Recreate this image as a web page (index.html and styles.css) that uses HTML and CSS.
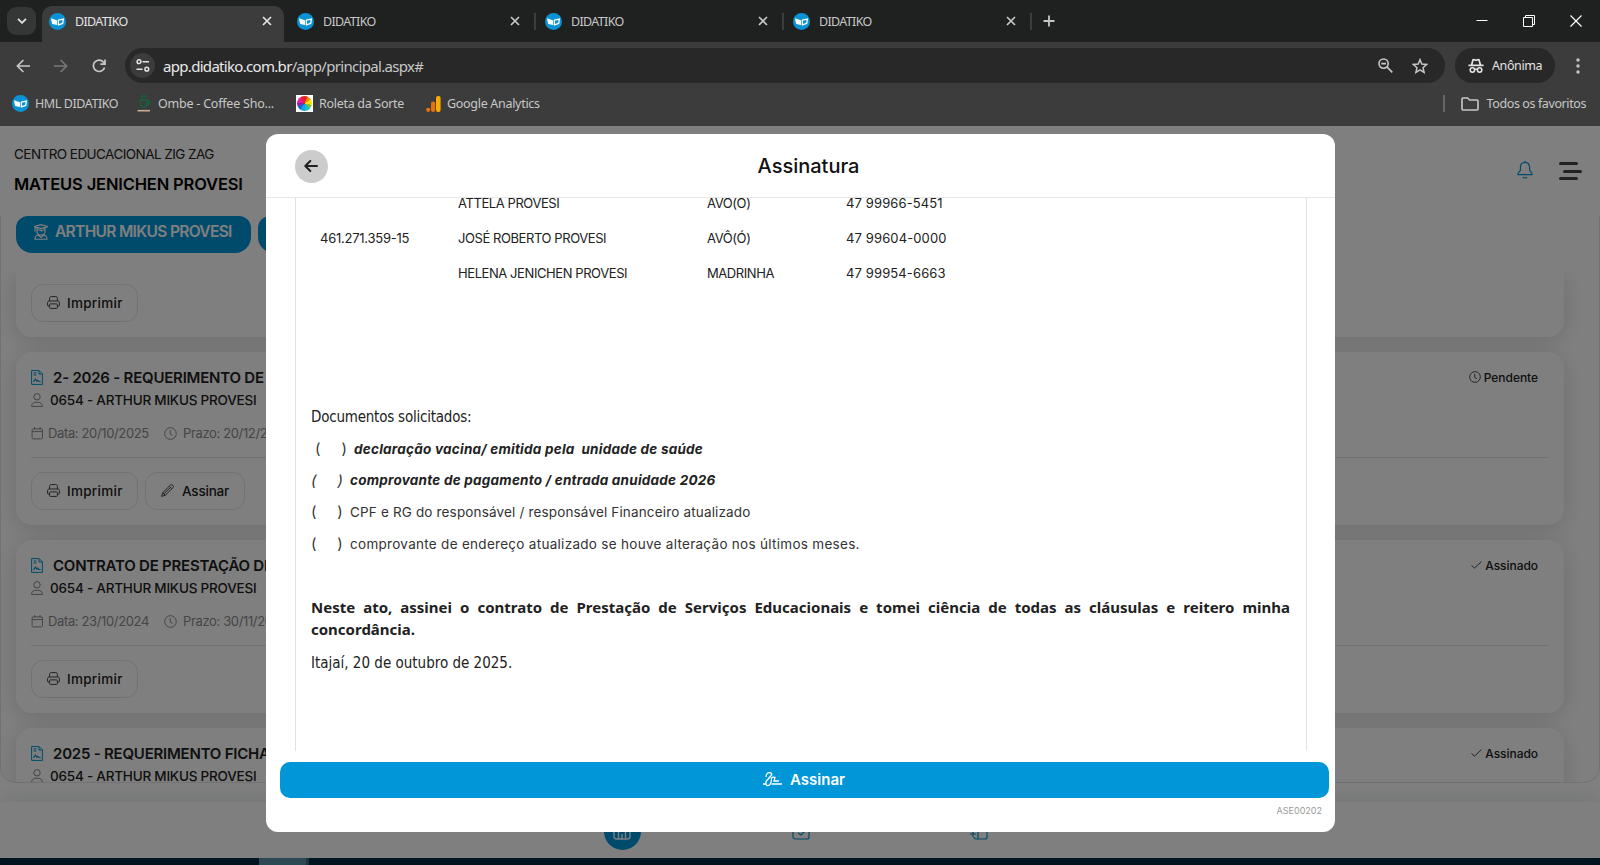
FILE: index.html
```html
<!DOCTYPE html>
<html lang="pt-BR">
<head>
    <meta charset="UTF-8">
    <meta name="viewport" content="width=device-width, initial-scale=1.0">
    <title>DIDATIKO</title>
    <link rel="stylesheet" href="styles.css">
</head>
<body>
    <!-- Shared icons -->
    <svg class="sprite" aria-hidden="true">
        <symbol id="logo" viewBox="0 0 18 18"><circle cx="9" cy="9" r="9" fill="#0a93d4"/><path d="M2 5.6l6.400 2.200v5L3.400 11.600z" fill="#fff"/><path d="M9.900 7.600l5.300-1.200-.7 4.700-4.600 1.500z" fill="none" stroke="#fff" stroke-width="1.400"/></symbol>
        <symbol id="close" viewBox="0 0 10 10"><path d="M1 1l8 8M9 1L1 9" fill="none" stroke="currentColor" stroke-width="1.7"/></symbol>
        <symbol id="doc" viewBox="0 0 12 15"><path d="M.6.6h7.6l3.2 3.2v10.6H.6zM8 .8V4h3.2M2.5 3h3M2.5 5h3" fill="none" stroke="currentColor"/><path d="M2.5 12l1.8-3 1.5 2 .9-.8 1 1.3h2" fill="none" stroke="currentColor" stroke-width="1.2"/></symbol>
        <symbol id="person" viewBox="0 0 12 14"><circle cx="6" cy="3.8" r="3.2" fill="none" stroke="currentColor"/><path d="M.6 13.4c0-3 2-4.2 5.4-4.2s5.4 1.2 5.4 4.2z" fill="none" stroke="currentColor"/></symbol>
        <symbol id="calendar" viewBox="0 0 12 13"><rect x=".6" y="1.9" width="10.4" height="10" rx="1.2" fill="none" stroke="currentColor"/><path d="M.6 4.6H11M3 0v2.4M8.6 0v2.4" fill="none" stroke="currentColor"/></symbol>
        <symbol id="clock" viewBox="0 0 13 13"><circle cx="6.5" cy="6.5" r="5.8" fill="none" stroke="currentColor"/><path d="M6.2 3v4l2.4 1.4" fill="none" stroke="currentColor"/></symbol>
        <symbol id="check" viewBox="0 0 11 8"><path d="M.6 4.4l2.8 2.8L10.4.6" fill="none" stroke="currentColor"/></symbol>
        <symbol id="printer" viewBox="0 0 13 13"><path d="M2.6 5V2.2C2.6 1.2 3.2.6 4.2.6h4.6c1 0 1.6.6 1.6 1.6V5" fill="none" stroke="currentColor"/><path d="M2.6 10.2H1.6c-.6 0-1-.4-1-1V6.6c0-1 .6-1.6 1.6-1.6h8.6c1 0 1.6.6 1.6 1.6v2.6c0 .6-.4 1-1 1h-1" fill="none" stroke="currentColor"/><rect x="2.6" y="7.9" width="7.8" height="4.5" rx=".8" fill="none" stroke="currentColor"/></symbol>
        <symbol id="pencil" viewBox="0 0 13 13"><path d="M.7 12.3l1-3.6L9.6.9c1.6-.8 3.3.9 2.5 2.5l-7.8 7.9zM1.7 8.7l2.6 2.6M8.2 2.3l2.5 2.5M3 9.800l6-6" fill="none" stroke="currentColor"/></symbol>
    </svg>

    <div class="browser">
        <div class="tab-strip">
            <div class="tab-search"><svg width="10" height="6" viewBox="0 0 10 6"><path d="M1 .8l4 4 4-4" fill="none" stroke="currentColor" stroke-width="1.8"/></svg></div>
            <div class="tab active"><svg class="favicon"><use href="#logo"/></svg><span>DIDATIKO</span><svg class="tab-close"><use href="#close"/></svg></div>
            <div class="tab"><svg class="favicon"><use href="#logo"/></svg><span>DIDATIKO</span><svg class="tab-close"><use href="#close"/></svg></div>
            <div class="tab"><svg class="favicon"><use href="#logo"/></svg><span>DIDATIKO</span><svg class="tab-close"><use href="#close"/></svg></div>
            <div class="tab"><svg class="favicon"><use href="#logo"/></svg><span>DIDATIKO</span><svg class="tab-close"><use href="#close"/></svg></div>
            <svg class="new-tab" viewBox="0 0 12 12"><path d="M6 .5v11M.5 6h11" stroke="currentColor" stroke-width="1.8"/></svg>
            <div class="window-buttons">
                <svg width="12" height="12" viewBox="0 0 12 12"><path d="M.5 5.5h11" stroke="currentColor"/></svg>
                <svg width="12" height="12" viewBox="0 0 12 12"><path d="M.5 2.5h9v9h-9zM2.5 2V.5h9v9H10" fill="none" stroke="currentColor"/></svg>
                <svg width="12" height="12" viewBox="0 0 12 12"><path d="M.5.5l11 11M11.5.5l-11 11" stroke="currentColor" stroke-width="1.2"/></svg>
            </div>
        </div>

        <div class="toolbar">
            <div class="nav-buttons">
                <svg width="14" height="14" viewBox="0 0 14 14"><path d="M14 7H1.6M7.4 1L1.4 7l6 6" fill="none" stroke="currentColor" stroke-width="1.7"/></svg>
                <svg class="disabled" width="14" height="14" viewBox="0 0 14 14"><path d="M0 7h12.4M6.6 1l6 6-6 6" fill="none" stroke="currentColor" stroke-width="1.7"/></svg>
                <svg width="14" height="14" viewBox="0 0 14 14"><path d="M12.6 8.4A5.7 5.7 0 1 1 11.4 3l1.4 1.5M13 .6v4.6H8.4" fill="none" stroke="currentColor" stroke-width="1.7"/></svg>
            </div>
            <div class="address-bar">
                <div class="site-info"><svg width="14" height="13" viewBox="0 0 14 13"><path d="M6.5 2.7H13M.5 10.2h6" stroke="currentColor" stroke-width="1.6"/><circle cx="3" cy="2.7" r="1.9" fill="none" stroke="currentColor" stroke-width="1.5"/><circle cx="10.8" cy="10.2" r="1.9" fill="none" stroke="currentColor" stroke-width="1.5"/></svg></div>
                <span class="url"><b>app.didatiko.com.br</b>/app/principal.aspx#</span>
                <svg width="15" height="15" viewBox="0 0 15 15"><circle cx="5.6" cy="5.6" r="4.6" fill="none" stroke="currentColor" stroke-width="1.6"/><path d="M9 9l5.3 5.3M3.3 5.6H8" stroke="currentColor" stroke-width="1.7"/></svg>
                <svg width="16" height="16" viewBox="0 0 16 16"><path d="M8 1.7l1.8 4.4 4.8.4-3.6 3.2 1.1 4.7L8 11.9l-4.1 2.5L5 9.7 1.4 6.5l4.8-.4z" fill="none" stroke="currentColor" stroke-width="1.5"/></svg>
            </div>
            <div class="incognito">
                <svg width="16" height="16" viewBox="0 0 16 16"><path d="M.5 7.3h15M3.6 7L5 1.8c1.5-.8 2.2.5 3 .5s1.5-1.3 3-.5L12.4 7" fill="none" stroke="currentColor" stroke-width="1.7"/><circle cx="4.4" cy="12" r="2.2" fill="none" stroke="currentColor" stroke-width="1.6"/><circle cx="11.6" cy="12" r="2.2" fill="none" stroke="currentColor" stroke-width="1.6"/><path d="M6.6 11.5c1-.6 1.8-.6 2.8 0" fill="none" stroke="currentColor" stroke-width="1.4"/></svg>
                <span>Anônima</span>
            </div>
            <svg class="kebab" width="4" height="16" viewBox="0 0 4 16"><circle cx="2" cy="2" r="1.7"/><circle cx="2" cy="8" r="1.7"/><circle cx="2" cy="14" r="1.7"/></svg>
        </div>

        <div class="bookmarks">
            <div class="bookmark hml"><svg class="favicon"><use href="#logo"/></svg><span>HML DIDATIKO</span></div>
            <div class="bookmark ombe"><svg width="14" height="17" viewBox="0 0 14 17"><path d="M3.500 1.800h6M5.500.5h3" stroke="#14613f" stroke-width="1.200"/><path d="M3.200 5h6.600v4.500c0 1.800-1 2.700-3.300 2.700s-3.300-.9-3.300-2.700zM10 6.200h2.600v2.600H10" fill="none" stroke="#14613f" stroke-width="1.500"/><path d="M.5 15.700h12.500" stroke="#c6ad93" stroke-width="1.600"/></svg><span>Ombe - Coffee Sho...</span></div>
            <div class="bookmark roleta"><div class="wheel"><i></i></div><span>Roleta da Sorte</span></div>
            <div class="bookmark analytics"><svg width="15" height="16" viewBox="0 0 15 16"><rect x="10" y="0" width="4.6" height="16" rx="2" fill="#f9ab00"/><rect x="5" y="5.5" width="4.2" height="10.5" rx="2" fill="#e8710a"/><circle cx="2.2" cy="13.8" r="2.1" fill="#e8710a"/></svg><span>Google Analytics</span></div>
            <div class="all-bookmarks"><svg width="18" height="14" viewBox="0 0 18 14"><path d="M1 12V2c0-.6.4-1 1-1h4.6l2 2H16c.6 0 1 .4 1 1v8c0 .6-.4 1-1 1H2c-.6 0-1-.4-1-1z" fill="none" stroke="currentColor" stroke-width="1.6"/></svg><span>Todos os favoritos</span></div>
        </div>
    </div>

    <div class="page">
        <div class="page-header">
            <div class="account">
                <p class="school">CENTRO EDUCACIONAL ZIG ZAG</p>
                <p class="user">MATEUS JENICHEN PROVESI</p>
            </div>
            <svg class="bell" viewBox="0 0 16 18"><path d="M8 1.3c-3 0-4.6 2.2-4.6 5v3L1 12.5v1.2h14v-1.2l-2.4-3.2v-3c0-2.8-1.6-5-4.6-5zM8 1.3V0M6 16c.8 1.3 3.2 1.3 4 0" fill="none" stroke="currentColor" stroke-width="1.2"/></svg>
            <div class="menu"><i></i><i></i><i></i></div>
        </div>

        <div class="content">
            <div class="students">
                <div class="student">
                    <svg width="14" height="16" viewBox="0 0 14 16"><path d="M0 2.6L7 .6l7 2-7 2zM3 4v4c0 4 8 4 8 0V4M1 3v4.5M3.5 6h3l1 1.2L8.5 6H11M1 15.3c0-3 1.5-4 3.5-4L7 13.5l2.5-2.2c2 0 3.5 1 3.5 4z" fill="none" stroke="currentColor" stroke-width="1.1"/></svg>
                    <span>ARTHUR MIKUS PROVESI</span>
                </div>
                <div class="student second"></div>
            </div>
            <div class="cards">
                <div class="card first">
                    <div class="actions"><div class="action"><svg><use href="#printer"/></svg>Imprimir</div></div>
                </div>
                <div class="card">
                    <div class="card-title"><svg class="doc"><use href="#doc"/></svg><h3>2- 2026 - REQUERIMENTO DE MATRÍCULA</h3><div class="status"><svg class="clock"><use href="#clock"/></svg>Pendente</div></div>
                    <div class="card-student"><svg><use href="#person"/></svg>0654 - ARTHUR MIKUS PROVESI</div>
                    <div class="dates"><svg><use href="#calendar"/></svg><span class="date">Data: 20/10/2025</span><svg><use href="#clock"/></svg><span>Prazo: 20/12/2025</span></div>
                    <div class="actions"><div class="action"><svg><use href="#printer"/></svg>Imprimir</div><div class="action sign"><svg><use href="#pencil"/></svg>Assinar</div></div>
                </div>
                <div class="card">
                    <div class="card-title"><svg class="doc"><use href="#doc"/></svg><h3>CONTRATO DE PRESTAÇÃO DE SERVIÇOS</h3><div class="status"><svg class="check"><use href="#check"/></svg>Assinado</div></div>
                    <div class="card-student"><svg><use href="#person"/></svg>0654 - ARTHUR MIKUS PROVESI</div>
                    <div class="dates"><svg><use href="#calendar"/></svg><span class="date">Data: 23/10/2024</span><svg><use href="#clock"/></svg><span>Prazo: 30/11/2024</span></div>
                    <div class="actions"><div class="action"><svg><use href="#printer"/></svg>Imprimir</div></div>
                </div>
                <div class="card">
                    <div class="card-title"><svg class="doc"><use href="#doc"/></svg><h3>2025 - REQUERIMENTO FICHA</h3><div class="status"><svg class="check"><use href="#check"/></svg>Assinado</div></div>
                    <div class="card-student"><svg><use href="#person"/></svg>0654 - ARTHUR MIKUS PROVESI</div>
                </div>
            </div>
        </div>

        <div class="bottom-nav">
            <div class="home"><svg width="18" height="18" viewBox="0 0 18 18"><path d="M1 6l8-5 8 5v8.5c0 1.5-.8 2.5-2.5 2.5h-11C1.8 17 1 16 1 14.500zM5.500 10v6.500M9 12v4.500M12.500 10v6.500" fill="none" stroke="currentColor" stroke-width="1.4"/></svg></div>
            <svg width="18" height="18" viewBox="0 0 18 18"><rect x="1" y="2" width="16" height="15" rx="2" fill="none" stroke="currentColor" stroke-width="1.2"/><path d="M1 6h16M6 11l3 2 3-3" fill="none" stroke="currentColor" stroke-width="1.2"/></svg>
            <svg width="18" height="18" viewBox="0 0 18 18"><path d="M4 8V3c0-1.2.8-2 2-2h9c1.2 0 2 .8 2 2v12c0 1.2-.8 2-2 2H6c-1.2 0-2-.8-2-2M8 1v16M0 12h6M3 9v6" fill="none" stroke="currentColor" stroke-width="1.2"/></svg>
        </div>
        <div class="overlay"></div>
    </div>

    <div class="taskbar"><i></i></div>

    <div class="modal">
        <div class="modal-header">
            <div class="back"><svg width="14" height="12" viewBox="0 0 14 12"><path d="M13 6H1.5M6.3 1l-5 5 5 5" fill="none" stroke="currentColor" stroke-width="2" stroke-linecap="round" stroke-linejoin="round"/></svg></div>
            <h1>Assinatura</h1>
        </div>
        <div class="document">
            <div class="contacts">
                <span></span><span>ATTELA PROVESI</span><span>AVÓ(Ó)</span><span class="phone">47 99966-5451</span>
                <span class="cpf-number">461.271.359-15</span><span>JOSÉ ROBERTO PROVESI</span><span>AVÔ(Ó)</span><span class="phone">47 99604-0000</span>
                <span></span><span>HELENA JENICHEN PROVESI</span><span>MADRINHA</span><span class="phone">47 99954-6663</span>
            </div>
            <p class="requested">Documentos solicitados:</p>
            <ul class="checklist">
                <li class="vaccine"><span class="box"><i>(</i><i>)</i></span><b>declaração vacina/ emitida pela&nbsp; unidade de saúde</b></li>
                <li class="payment"><span class="box"><i>(</i><i>)</i></span><b>comprovante de pagamento / entrada anuidade 2026</b></li>
                <li class="cpf"><span class="box"><i>(</i><i>)</i></span><span>CPF e RG do responsável / responsável Financeiro atualizado</span></li>
                <li class="address"><span class="box"><i>(</i><i>)</i></span><span>comprovante de endereço atualizado se houve alteração nos últimos meses.</span></li>
            </ul>
            <p class="statement">Neste ato, assinei o contrato de Prestação de Serviços Educacionais e tomei ciência de todas as cláusulas e reitero minha concordância.</p>
            <p class="place">Itajaí, 20 de outubro de 2025.</p>
        </div>
        <button class="sign-button" type="button">
            <svg width="19" height="15" viewBox="0 0 19 15"><path d="M0 12h3.5M8.5 12H19M3 5c0-2.5 1.5-4.3 3.5-4.3s3 1.5 1.5 3L3.8 8.5c-1.6 2-1.2 5.2 1 5.2C8 13.7 8.5 8 8.5 5.5M8.5 6c1-1 2-1.2 3.5-.7l-1 3.7h5" fill="none" stroke="currentColor" stroke-width="1.3"/></svg>
            <span>Assinar</span>
        </button>
        <div class="code">ASE00202</div>
    </div>
</body>
</html>
```
FILE: styles.css
```css
:root {
    --strip: #1f2120;
    --toolbar: #3c3c3c;
    --field: #282828;
    --chrome-text: #c7c7c7;
    --brand: #0096d8;
    --text: #212121;
}

* {
    margin: 0;
    padding: 0;
    box-sizing: border-box;
}

body {
    width: 1600px;
    height: 865px;
    overflow: hidden;
    position: relative;
    background: #fff;
    color: var(--text);
    font-family: 'Inter', sans-serif;
}

svg {
    flex: none;
}

.sprite {
    display: none;
}

/* Browser window */
.browser {
    height: 126px;
    background: var(--toolbar);
    color: var(--chrome-text);
    font-family: 'Noto Sans', sans-serif;
    font-size: 12.5px;
    white-space: nowrap;
}

.tab-strip {
    height: 42px;
    display: flex;
    align-items: center;
    padding-left: 7px;
    background: var(--strip);
}

.tab-search {
    width: 29px;
    height: 28px;
    margin-right: 6px;
    border-radius: 9px;
    background: #353736;
    display: flex;
    align-items: center;
    justify-content: center;
    color: #e3e3e3;
}

.tab {
    width: 248px;
    height: 36px;
    margin-top: 6px;
    padding: 0 14px 6px 7px;
    display: flex;
    align-items: center;
}

.tab span {
    margin-left: 9px;
    flex: 1;
    letter-spacing: -0.65px;
}

.tab::after {
    content: '';
    width: 2px;
    height: 17px;
    margin: 0 -12px 0 14px;
    background: #3c3e3d;
}

.tab.active {
    width: 242px;
    margin-right: 6px;
    padding-right: 12px;
    border-radius: 10px 10px 0 0;
    background: var(--toolbar);
    color: #e3e3e3;
}

.tab.active::after {
    display: none;
}

.favicon {
    width: 17px;
    height: 17px;
}

.tab-close {
    width: 10px;
    height: 10px;
}

.new-tab {
    width: 12px;
    height: 12px;
    margin-left: 9px;
}

.window-buttons {
    margin-left: auto;
    padding-right: 18px;
    display: flex;
    gap: 35px;
    color: #fff;
}

.toolbar {
    height: 47px;
    display: flex;
    align-items: center;
    padding-left: 16px;
}

.nav-buttons {
    width: 109px;
    display: flex;
    gap: 24px;
}

.nav-buttons .disabled {
    color: #777;
}

.address-bar {
    width: 1320px;
    height: 35px;
    padding: 0 17px 0 5px;
    border-radius: 18px;
    background: var(--field);
    display: flex;
    align-items: center;
    gap: 19px;
}

.site-info {
    width: 25px;
    height: 25px;
    margin-right: -11px;
    border-radius: 50%;
    background: #3c3c3c;
    color: #e3e3e3;
    display: flex;
    align-items: center;
    justify-content: center;
}

.url {
    flex: 1;
    font-size: 15px;
    letter-spacing: -0.69px;
}

.url b {
    color: #e8e8e8;
    font-weight: 400;
}

.incognito {
    width: 100px;
    height: 35px;
    margin-left: 10px;
    padding-left: 13px;
    border-radius: 18px;
    background: var(--field);
    color: #e3e3e3;
    display: flex;
    align-items: center;
    gap: 8px;
    letter-spacing: -0.4px;
}

.kebab {
    margin-left: 21px;
    fill: var(--chrome-text);
}

.bookmarks {
    height: 30px;
    display: flex;
    align-items: center;
    padding: 0 14px 1px 12px;
    font-size: 12.5px;
}

.bookmark {
    display: flex;
    align-items: center;
    gap: 6px;
    letter-spacing: -0.3px;
}

.hml {
    width: 125px;
    letter-spacing: -0.42px;
}

.ombe {
    width: 159px;
    gap: 7px;
    letter-spacing: -0.22px;
}

.roleta {
    width: 130px;
}

.wheel {
    width: 17px;
    height: 17px;
    padding: 1px;
    background: #fff;
}

.wheel i {
    display: block;
    width: 15px;
    height: 15px;
    border-radius: 50%;
    background: conic-gradient(#e32222 0 7%, #f58a00 0 16%, #f7e600 0 28%, #7fc52c 0 37%, #16c0d0 0 48%, #16a0e0 0 60%, #1368d2 0 68%, #8c22a8 0 77%, #e61b9a 0 91%, #e32222 0);
}

.all-bookmarks {
    margin-left: auto;
    padding-left: 16px;
    border-left: 2px solid #666;
    height: 17px;
    display: flex;
    align-items: center;
    gap: 8px;
    letter-spacing: -0.4px;
}

/* Page behind the dialog */
.page {
    position: relative;
    height: 732px;
    display: flex;
    flex-direction: column;
}

.page-header {
    height: 90px;
    padding: 0 18px 0 14px;
    display: flex;
}

.account {
    flex: 1;
    padding-top: 18px;
}

.school {
    font-size: 13.5px;
    line-height: 20px;
    letter-spacing: -0.55px;
}

.user {
    margin-top: 10px;
    font-size: 16.5px;
    line-height: 20px;
    font-weight: 600;
    color: #000;
    letter-spacing: -0.15px;
}

.bell {
    width: 16px;
    height: 18px;
    margin: 35px 26px 0 0;
    color: var(--brand);
}

.menu {
    width: 23px;
    padding-top: 36px;
}

.menu i {
    display: block;
    width: 19px;
    height: 3px;
    margin-bottom: 4.5px;
    border-radius: 2px;
    background: #444;
}

.menu i:nth-child(2) {
    margin-left: 4px;
}

.content {
    height: 567px;
    border: 1px solid #e4e4e4;
    border-top: 0;
    border-radius: 0 0 16px 16px;
    overflow: hidden;
}

.students {
    height: 56px;
    padding-left: 15px;
    display: flex;
    gap: 7px;
}

.student {
    width: 235px;
    height: 37px;
    padding: 0 0 6px 18px;
    border-radius: 12px 12px 16px 16px;
    background: var(--brand);
    color: #fff;
    font-size: 15.5px;
    font-weight: 600;
    display: flex;
    align-items: center;
    gap: 7px;
    white-space: nowrap;
    letter-spacing: -0.66px;
}

.cards {
    height: 511px;
    padding: 0 35px 0 15px;
    overflow: hidden;
}

.card {
    height: 173px;
    margin-bottom: 15px;
    padding: 15px;
    border-radius: 16px;
    background: #fff;
    box-shadow: 0 4px 22px rgba(0, 0, 0, 0.14);
}

.card.first {
    height: 65px;
    padding-top: 0;
    border-radius: 0 0 16px 16px;
}

.card.first .actions {
    margin-top: 0;
    padding-top: 12px;
    border-top: 0;
}

.card-title {
    height: 20px;
    display: flex;
    align-items: center;
}

.card-title h3 {
    flex: 1;
    margin-left: 10px;
    font-size: 15px;
    font-weight: 600;
    letter-spacing: -0.22px;
}

.doc {
    width: 12px;
    height: 15px;
    color: var(--brand);
}

.status {
    margin-right: 11px;
    display: flex;
    align-items: center;
    gap: 3px;
    font-size: 12px;
    font-weight: 500;
    letter-spacing: -0.05px;
}

.status svg {
    color: #444;
}

.clock {
    width: 12px;
    height: 12px;
}

.check {
    width: 11px;
    height: 8px;
}

.card-student {
    height: 25px;
    display: flex;
    align-items: center;
    gap: 7px;
    font-size: 13.5px;
    font-weight: 500;
    letter-spacing: -0.22px;
}

.card-student svg {
    width: 12px;
    height: 14px;
    color: #888;
}

.dates {
    height: 22px;
    margin-top: 10px;
    display: flex;
    align-items: center;
    font-size: 13px;
    color: #8c8c8c;
    letter-spacing: -0.36px;
}

.dates svg {
    width: 13px;
    height: 13px;
    margin-right: 4px;
}

.date {
    width: 116px;
}

.date + svg {
    margin-right: 6px;
}

.actions {
    margin-top: 13px;
    padding-top: 14px;
    border-top: 1px solid #e2e2e2;
    display: flex;
    gap: 7px;
}

.action {
    width: 107px;
    height: 38px;
    padding: 0 0 1px 15px;
    border: 1px solid #e4e4e4;
    border-radius: 12px;
    display: flex;
    align-items: center;
    gap: 7px;
    font-size: 13.5px;
    font-weight: 500;
    letter-spacing: 0.28px;
}

.action svg {
    width: 13px;
    height: 13px;
    color: #444;
}

.action.sign {
    width: 100px;
    gap: 8px;
    letter-spacing: -0.2px;
}

.bottom-nav {
    height: 56px;
    margin-top: 19px;
    padding: 2px 9px 0 0;
    display: flex;
    justify-content: center;
    gap: 160px;
    align-items: center;
    box-shadow: 0 -3px 16px rgba(0, 60, 40, 0.1);
    color: var(--brand);
}

.home {
    width: 37px;
    height: 37px;
    margin-right: -9px;
    border-radius: 50%;
    background: var(--brand);
    color: #fff;
    display: flex;
    align-items: center;
    justify-content: center;
}

.overlay {
    position: absolute;
    inset: 0;
    background: rgba(0, 0, 0, 0.5);
}

.taskbar {
    height: 7px;
    padding-left: 259px;
    background: #001521;
}

.taskbar i {
    display: block;
    width: 50px;
    height: 7px;
    background: #2f4956;
    border-right: 3px solid #1b3542;
}

/* Signature dialog */
.modal {
    position: absolute;
    left: 266px;
    top: 134px;
    width: 1069px;
    height: 698px;
    border-radius: 12px;
    background: #fff;
    display: flex;
    flex-direction: column;
}

.modal-header {
    height: 64px;
    padding: 1px 29px 0;
    border-bottom: 1px solid #e6e6e6;
    display: flex;
    align-items: center;
}

.back {
    width: 33px;
    height: 33px;
    padding-right: 1px;
    border-radius: 50%;
    background: #ccc;
    display: flex;
    align-items: center;
    justify-content: center;
}

.modal-header h1 {
    flex: 1;
    padding-right: 17px;
    text-align: center;
    font-size: 20px;
    font-weight: 500;
    color: #111;
}

.document {
    width: 1012px;
    height: 553px;
    margin-left: 29px;
    padding: 0 16px 0 15px;
    border: 1px solid #e2e2e2;
    border-width: 0 1px;
    overflow: hidden;
}

.contacts {
    margin: -13px 0 0 9px;
    display: grid;
    grid-template-columns: 138px 249px 139px auto;
    grid-auto-rows: 35px;
    align-items: center;
    font-size: 13px;
    letter-spacing: -0.42px;
}

.contacts .cpf-number {
    letter-spacing: -0.25px;
}

.contacts .phone {
    letter-spacing: 0.12px;
}

.requested,
.place {
    font-family: 'DejaVu Sans Condensed', 'Noto Sans', sans-serif;
    font-size: 15px;
    line-height: 22px;
}

.requested {
    margin-top: 116px;
    letter-spacing: -0.22px;
}

.checklist {
    margin-top: 5px;
    list-style: none;
    font-size: 13.5px;
    color: #333;
}

.checklist li {
    height: 31.6px;
    display: flex;
    align-items: center;
    white-space: nowrap;
}

.box {
    width: 39px;
    padding-right: 7px;
    display: flex;
    justify-content: space-between;
    font-size: 15px;
}

.box i {
    font-style: normal;
}

.checklist b {
    font-style: italic;
    font-weight: 700;
    color: #222;
    letter-spacing: 0.24px;
}

.vaccine {
    padding-left: 4px;
}

.payment .box i {
    font-style: italic;
}

.cpf {
    letter-spacing: 0.16px;
}

.address {
    letter-spacing: 0.29px;
}

.statement {
    margin-top: 37px;
    font-family: 'Noto Sans', sans-serif;
    font-size: 15px;
    line-height: 22px;
    font-weight: 700;
    text-align: justify;
}

.place {
    margin-top: 12px;
}

.sign-button {
    width: 1049px;
    height: 36px;
    margin: 11px 0 0 14px;
    padding: 0 1px 2px 0;
    border: 0;
    border-radius: 10px;
    background: var(--brand);
    color: #fff;
    font-family: 'Inter', sans-serif;
    font-size: 15px;
    font-weight: 600;
    display: flex;
    align-items: center;
    justify-content: center;
    gap: 8px;
}

.code {
    margin: 6px 13px 0 0;
    text-align: right;
    font-size: 9px;
    line-height: 13px;
    color: #999;
}
```
